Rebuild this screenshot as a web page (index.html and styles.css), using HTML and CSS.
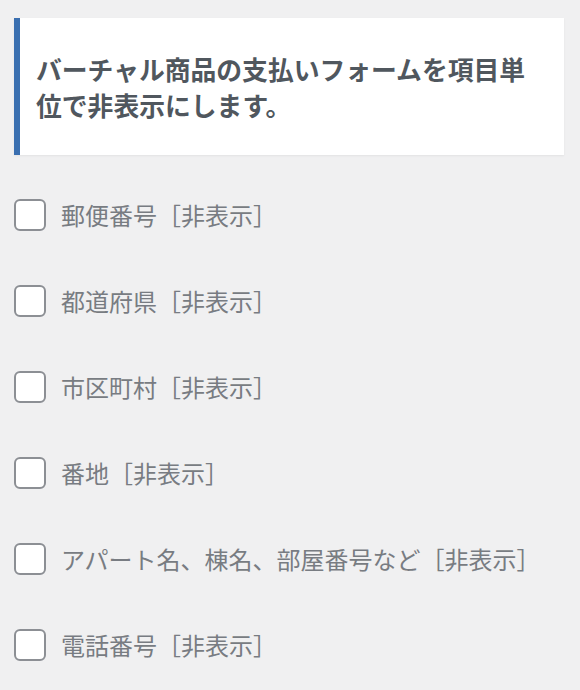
FILE: index.html
```html
<!DOCTYPE html>
<html lang="ja">
<head>
<meta charset="utf-8">
<link rel="stylesheet" href="styles.css">
</head>
<body>
<div class="page">
  <div class="notice">
    <p class="notice-text">バーチャル商品の支払いフォームを項目単位で非表示にします。</p>
  </div>
  <ul class="options">
    <li class="option"><span class="box"></span><span class="label">郵便番号［非表示］</span></li>
    <li class="option"><span class="box"></span><span class="label">都道府県［非表示］</span></li>
    <li class="option"><span class="box"></span><span class="label">市区町村［非表示］</span></li>
    <li class="option"><span class="box"></span><span class="label">番地［非表示］</span></li>
    <li class="option"><span class="box"></span><span class="label">アパート名、棟名、部屋番号など［非表示］</span></li>
    <li class="option"><span class="box"></span><span class="label">電話番号［非表示］</span></li>
  </ul>
</div>
</body>
</html>
```

FILE: styles.css
```css
html, body {
  margin: 0;
  padding: 0;
  background: #f0f0f1;
}
body {
  font-family: "Noto Sans CJK JP", "Noto Sans", sans-serif;
}
.page {
  padding: 18px 16px 0 14px;
}
.notice {
  background: #fff;
  border-left: 6px solid #3a6fb0;
  box-shadow: 0 1px 2px rgba(0, 0, 0, 0.06);
  padding: 33px 16px 32px 16px;
}
.notice-text {
  margin: 0;
  font-size: 25.8px;
  line-height: 36px;
  font-weight: 700;
  color: #50575e;
}
.options {
  list-style: none;
  margin: 44px 0 0 0;
  padding: 0;
  display: flex;
  flex-direction: column;
  gap: 54px;
}
.option {
  display: flex;
  align-items: center;
  gap: 15px;
  height: 32px;
}
.box {
  box-sizing: border-box;
  width: 32px;
  height: 32px;
  border: 2px solid #8c8f94;
  border-radius: 6px;
  background: #fff;
  flex: none;
}
.label {
  font-size: 24px;
  line-height: 32px;
  color: #787c82;
}
```
